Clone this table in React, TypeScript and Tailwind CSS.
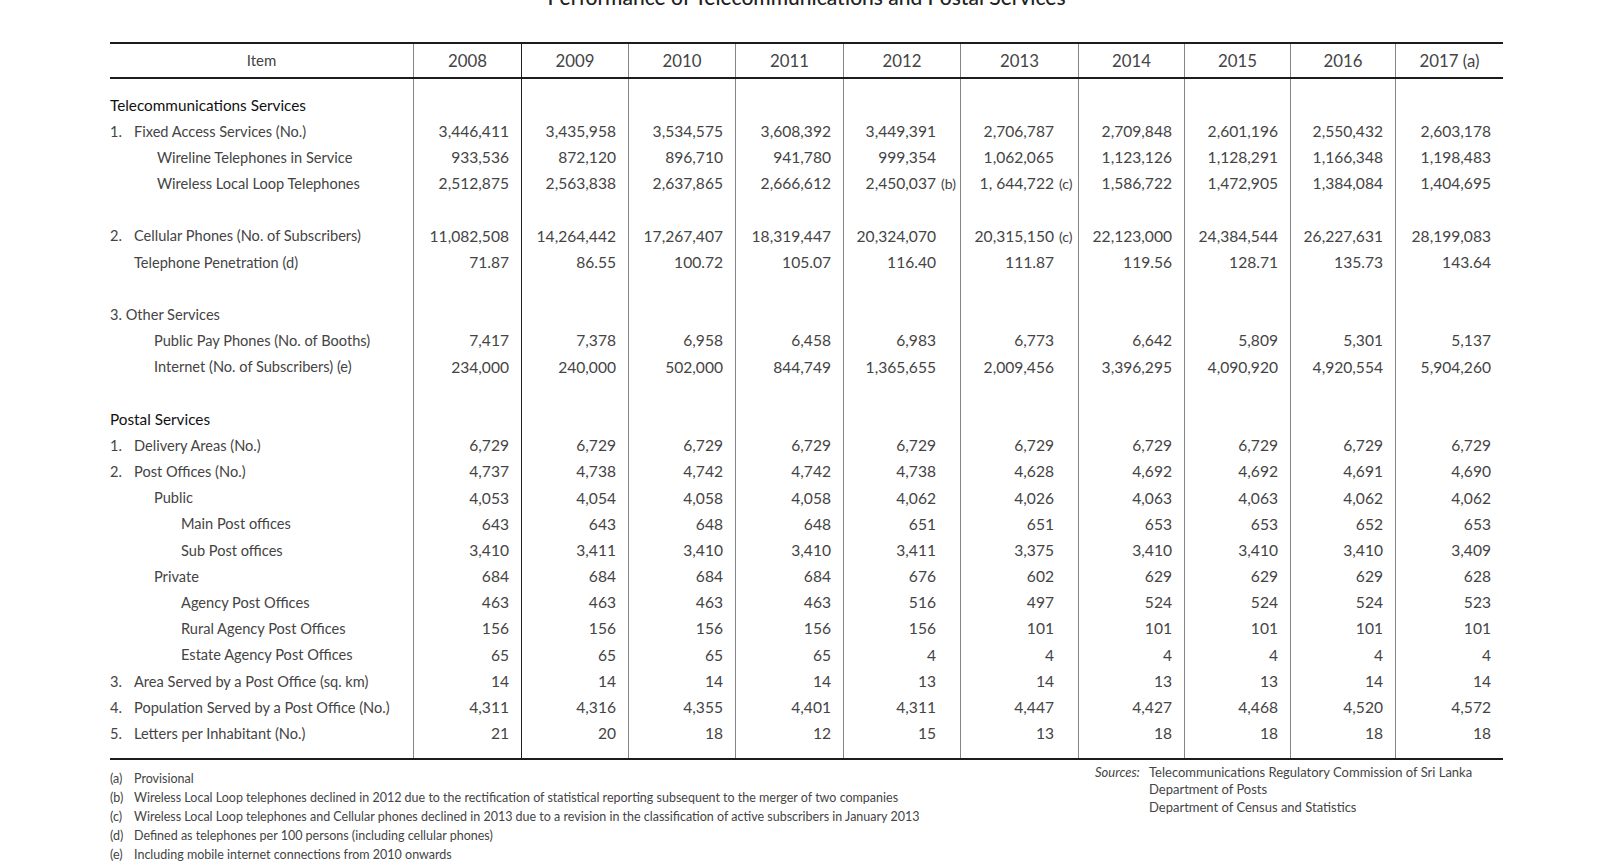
const years = ["2008", "2009", "2010", "2011", "2012", "2013", "2014", "2015", "2016", "2017 (a)"];

// vertical rule per column (index 0 = item column, no rule)
const rules = [
  "",
  "border-l border-[#858585]",
  "border-l border-[#1f1f1f]",
  "border-l border-[#858585]",
  "border-l border-[#858585]",
  "border-l border-[#858585]",
  "border-l border-[#858585]",
  "border-l border-[#858585]",
  "border-l border-[#858585]",
  "border-l border-[#858585]",
  "border-l border-[#858585]",
];

const gridCols =
  "grid grid-cols-[303px_108px_107px_107px_108px_117px_118px_106px_106px_105px_108px]";

type Row = {
  label?: string;
  no?: string;
  indent?: string;
  section?: boolean;
  values?: string[];
  notes?: Record<number, string>;
};

const rows: Row[] = [
  { label: "Telecommunications Services", section: true },
  {
    no: "1.",
    label: "Fixed Access Services (No.)",
    values: ["3,446,411", "3,435,958", "3,534,575", "3,608,392", "3,449,391", "2,706,787", "2,709,848", "2,601,196", "2,550,432", "2,603,178"],
  },
  {
    label: "Wireline Telephones in Service",
    indent: "pl-[47px]",
    values: ["933,536", "872,120", "896,710", "941,780", "999,354", "1,062,065", "1,123,126", "1,128,291", "1,166,348", "1,198,483"],
  },
  {
    label: "Wireless Local Loop Telephones",
    indent: "pl-[47px]",
    values: ["2,512,875", "2,563,838", "2,637,865", "2,666,612", "2,450,037", "1, 644,722", "1,586,722", "1,472,905", "1,384,084", "1,404,695"],
    notes: { 4: "(b)", 5: "(c)" },
  },
  {},
  {
    no: "2.",
    label: "Cellular Phones (No. of Subscribers)",
    values: ["11,082,508", "14,264,442", "17,267,407", "18,319,447", "20,324,070", "20,315,150", "22,123,000", "24,384,544", "26,227,631", "28,199,083"],
    notes: { 5: "(c)" },
  },
  {
    label: "Telephone Penetration (d)",
    indent: "pl-[24px]",
    values: ["71.87", "86.55", "100.72", "105.07", "116.40", "111.87", "119.56", "128.71", "135.73", "143.64"],
  },
  {},
  { label: "3. Other Services" },
  {
    label: "Public Pay Phones (No. of Booths)",
    indent: "pl-[44px]",
    values: ["7,417", "7,378", "6,958", "6,458", "6,983", "6,773", "6,642", "5,809", "5,301", "5,137"],
  },
  {
    label: "Internet (No. of Subscribers) (e)",
    indent: "pl-[44px]",
    values: ["234,000", "240,000", "502,000", "844,749", "1,365,655", "2,009,456", "3,396,295", "4,090,920", "4,920,554", "5,904,260"],
  },
  {},
  { label: "Postal Services", section: true },
  {
    no: "1.",
    label: "Delivery Areas (No.)",
    values: ["6,729", "6,729", "6,729", "6,729", "6,729", "6,729", "6,729", "6,729", "6,729", "6,729"],
  },
  {
    no: "2.",
    label: "Post Offices (No.)",
    values: ["4,737", "4,738", "4,742", "4,742", "4,738", "4,628", "4,692", "4,692", "4,691", "4,690"],
  },
  {
    label: "Public",
    indent: "pl-[44px]",
    values: ["4,053", "4,054", "4,058", "4,058", "4,062", "4,026", "4,063", "4,063", "4,062", "4,062"],
  },
  {
    label: "Main Post offices",
    indent: "pl-[71px]",
    values: ["643", "643", "648", "648", "651", "651", "653", "653", "652", "653"],
  },
  {
    label: "Sub Post offices",
    indent: "pl-[71px]",
    values: ["3,410", "3,411", "3,410", "3,410", "3,411", "3,375", "3,410", "3,410", "3,410", "3,409"],
  },
  {
    label: "Private",
    indent: "pl-[44px]",
    values: ["684", "684", "684", "684", "676", "602", "629", "629", "629", "628"],
  },
  {
    label: "Agency Post Offices",
    indent: "pl-[71px]",
    values: ["463", "463", "463", "463", "516", "497", "524", "524", "524", "523"],
  },
  {
    label: "Rural Agency Post Offices",
    indent: "pl-[71px]",
    values: ["156", "156", "156", "156", "156", "101", "101", "101", "101", "101"],
  },
  {
    label: "Estate Agency Post Offices",
    indent: "pl-[71px]",
    values: ["65", "65", "65", "65", "4", "4", "4", "4", "4", "4"],
  },
  {
    no: "3.",
    label: "Area Served by a Post Office (sq. km)",
    values: ["14", "14", "14", "14", "13", "14", "13", "13", "14", "14"],
  },
  {
    no: "4.",
    label: "Population Served by a Post Office (No.)",
    values: ["4,311", "4,316", "4,355", "4,401", "4,311", "4,447", "4,427", "4,468", "4,520", "4,572"],
  },
  {
    no: "5.",
    label: "Letters per Inhabitant (No.)",
    values: ["21", "20", "18", "12", "15", "13", "18", "18", "18", "18"],
  },
];

const footnotes = [
  ["(a)", "Provisional"],
  ["(b)", "Wireless Local Loop telephones declined in 2012 due to the rectification of statistical reporting subsequent to the merger of two companies"],
  ["(c)", "Wireless Local Loop telephones and Cellular phones declined in 2013 due to a revision in the classification of active subscribers in January 2013"],
  ["(d)", "Defined as telephones per 100 persons (including cellular phones)"],
  ["(e)", "Including mobile internet connections from 2010 onwards"],
];

function Spacer({ h }: { h: string }) {
  return (
    <div className={`${gridCols} ${h}`}>
      {rules.map((r, i) => (
        <div key={i} className={r} />
      ))}
    </div>
  );
}

function BodyRow({ row }: { row: Row }) {
  const label = row.section ? (
    <span className="text-[15.3px] text-[#111]">{row.label}</span>
  ) : row.no ? (
    <>
      <span className="w-[24px] shrink-0">{row.no}</span>
      <span>{row.label}</span>
    </>
  ) : (
    <span className={row.indent}>{row.label}</span>
  );

  return (
    <div className={`${gridCols} h-[26.2px]`}>
      <div className="flex items-center whitespace-nowrap text-[14.6px]">{row.label && label}</div>
      {rules.slice(1).map((r, i) => {
        const wide = i === 4 || i === 5;
        const v = row.values?.[i];
        return (
          <div key={i} className={`${r} flex items-center justify-end whitespace-nowrap text-[15.6px] ${wide ? "" : "pr-3"}`}>
            {v}
            {wide && <span className="w-[24px] shrink-0 pl-[5px] text-[14px]">{row.notes?.[i]}</span>}
          </div>
        );
      })}
    </div>
  );
}

export default function App() {
  return (
    <div className="h-[866px] overflow-hidden bg-white font-['Lato','Liberation_Sans',sans-serif] text-[#444]">
      <div className="w-[1393px] ml-[110px]">
        <h1 className="-mt-[14px] h-[21px] text-center text-[21px] leading-none font-medium text-[#222]">
          Performance of Telecommunications and Postal Services
        </h1>

        <div className="mt-[35px] border-y-2 border-[#1c1c1c]">
          <div className={`${gridCols} h-[35px] border-b-2 border-[#1c1c1c]`}>
            <div className="flex items-center justify-center text-[15px]">Item</div>
            {years.map((y, i) => (
              <div key={y} className={`${rules[i + 1]} flex items-center justify-center text-[16.8px]`}>
                {y}
              </div>
            ))}
          </div>
          <Spacer h="h-[13.3px]" />
          {rows.map((row, i) => (
            <BodyRow key={i} row={row} />
          ))}
          <Spacer h="h-[11px]" />
        </div>

        <div className="flex">
          <div className="mt-[9px] w-[985px] text-[12.5px] leading-[19px]">
            {footnotes.map(([k, t]) => (
              <div key={k} className="flex whitespace-nowrap">
                <span className="w-[24px] shrink-0">{k}</span>
                <span>{t}</span>
              </div>
            ))}
          </div>
          <div className="mt-[4px] flex text-[13px] leading-[17.3px] whitespace-nowrap">
            <span className="w-[54px] shrink-0 italic">Sources:</span>
            <div>
              <div>Telecommunications Regulatory Commission of Sri Lanka</div>
              <div>Department of Posts</div>
              <div>Department of Census and Statistics</div>
            </div>
          </div>
        </div>
      </div>
    </div>
  );
}
